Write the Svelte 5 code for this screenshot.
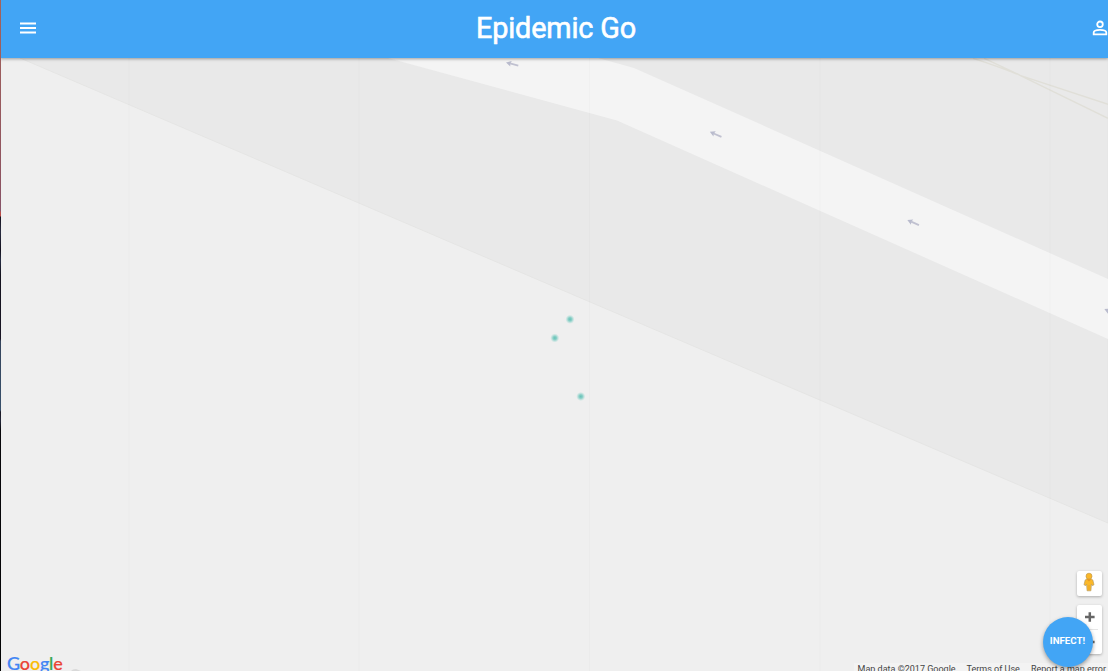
<script>
  const tiles = [129, 359, 589.5, 820, 1050];
  const players = [[570, 319.3], [554.8, 338], [580.8, 396.5]];
  const arrows = [[512, 64, 15], [715.5, 134.3, 24], [913, 222.5, 24], [1110, 311.5, 24]];
  const logo = [['G', '#4285f4'], ['o', '#ea4335'], ['o', '#fbbc05'], ['g', '#4285f4'], ['l', '#34a853'], ['e', '#ea4335']];
</script>

<div class="window">
  <div class="edge"></div>
  <header>
    <button class="menu" aria-label="Menu">
      <svg width="16" height="12" viewBox="0 0 16 12"><path d="M0 1.5h16M0 6h16M0 10.5h16" stroke="#fff" stroke-width="1.8" /></svg>
    </button>
    <h1>Epidemic Go</h1>
    <button class="account" aria-label="Account">
      <svg width="16" height="16" viewBox="0 0 16 16" fill="none" stroke="#fff" stroke-width="1.8"><circle cx="8" cy="4.3" r="2.8" /><path d="M1.7 14.3V12.5C1.7 10.7 5.5 9.9 8 9.9s6.3.8 6.3 2.6v1.8z" /></svg>
    </button>
  </header>
  <main>
    <svg class="map" width="1108" height="613" viewBox="0 58 1108 613">
      <defs>
        <radialGradient id="glow">
          <stop offset="0" stop-color="#62c1b5" />
          <stop offset=".4" stop-color="#72c8be" stop-opacity=".8" />
          <stop offset="1" stop-color="#9ad8d0" stop-opacity="0" />
        </radialGradient>
      </defs>
      <path d="M0 58h1108v613H0z" fill="#efefef" />
      <path d="M20 58H1108V523L562 290z" fill="#e9e9e9" stroke="#e5e5e4" />
      <path d="M388 58H598L634 68L1108 279V339L617 120.5z" fill="#f4f4f4" />
      <path d="M973 58Q1001 67 1020 75L1108 104M984 58Q1010 70 1020 75L1108 118" transform="translate(0 .3)" fill="none" stroke="#e0dfd8" stroke-width="1.3" />
      {#each tiles as x}
        <path d="M{x} 58V671" stroke="#000" stroke-opacity=".015" />
      {/each}
      {#each arrows as [x, y, angle]}
        <g transform="translate({x} {y}) rotate({angle})">
          <path d="M6.5 0H-2" stroke="#c0c1d0" stroke-width="1.8" />
          <path d="M-6.2 0L-1-2.9L-1.8 0L-1 2.9z" fill="#b9bbcd" />
        </g>
      {/each}
      {#each players as [x, y]}
        <circle cx={x} cy={y} r="4.6" fill="url(#glow)" />
      {/each}
      <path d="M71 671l2-1.5 3-.5 5 2z" fill="#d9d9d9" />
    </svg>
    <div class="logo">{#each logo as [letter, color]}<span style="color:{color}">{letter}</span>{/each}</div>
    <div class="credits"><span>Map data ©2017 Google</span><span>Terms of Use</span><span>Report a map error</span></div>
    <div class="controls">
      <div class="pegman">
        <svg width="12" height="20" viewBox="0 0 12 20"><path d="M3.6 7L2.2 8 1 12.8l1.8.8.8-1.4.5 6.6h3.8l.5-6.6.8 1.4 1.8-.8L9.8 8 8.4 7z" fill="#fbb829" stroke="#b79c63" stroke-width=".7" /><circle cx="6" cy="4.2" r="3" fill="#fbb829" stroke="#c29a4c" stroke-width=".7" /><path d="M3.6 7.2h4.8L6 9.5z" fill="#e69624" /><path d="M6 13v5" stroke="#df9c22" stroke-width=".7" /></svg>
      </div>
      <div class="zoom">
        <svg width="25" height="24" viewBox="0 0 25 24"><path d="M8 12h9.6M12.8 7.2v9.6" stroke="#666" stroke-width="2.5" /></svg>
        <i></i>
        <svg width="25" height="24" viewBox="0 0 25 24"><path d="M8 12h9.6" stroke="#666" stroke-width="2.5" /></svg>
      </div>
    </div>
    <button class="infect">INFECT!</button>
  </main>
</div>

<style>
  :global(body) { overflow: hidden; }
  .window { position: relative; display: flex; flex-direction: column; width: 1108px; height: 671px; overflow: hidden; font-family: Roboto, sans-serif; }
  .edge { position: absolute; z-index: 4; left: 0; top: 0; width: 1px; height: 671px; background: linear-gradient(#a4635b 0, #8e5360 180px, #865469 211px, #b94c48 212px, #b94c48 216px, #16131f 217px, #282b40 232px, #13101d 250px, #252c42 260px, #14121e 275px, #191524 339px, #34445c 341px, #38506b 410px, #191823 412px, #222638 421px, #08070b 430px, #030304 671px); }
  header { position: relative; z-index: 3; display: grid; grid-template-columns: 56px 1fr 56px; align-items: center; flex: 0 0 58px; box-sizing: border-box; padding-bottom: 2px; background: #42a5f5; box-shadow: 0 1px 3px rgba(0,0,0,.35); }
  button { border: 0; margin: 0; padding: 0; font: inherit; }
  header button { display: flex; background: none; }
  .menu { padding-left: 20px; }
  .account { justify-content: flex-start; padding-left: 40px; }
  h1 { margin: 0; color: #fff; text-align: center; font-size: 28.8px; line-height: 56px; font-weight: 400; -webkit-text-stroke: .6px #fff; padding-left: 4px; letter-spacing: -.15px; }
  main { position: relative; flex: 1; overflow: hidden; }
  .map { display: block; }
  .logo { position: absolute; left: 7px; bottom: -4px; font: 500 18px/24px Lato, sans-serif; letter-spacing: -.2px; -webkit-text-stroke: .2px currentColor; }
  .credits { position: absolute; right: 0; bottom: -4px; height: 12px; display: flex; gap: 11px; padding: 0 2px 0 4px; background: #f3f3f3; color: #444; font-size: 9px; line-height: 12px; white-space: nowrap; }
  .controls { position: absolute; right: 6px; top: 513px; width: 25px; display: flex; flex-direction: column; gap: 9px; }
  .pegman, .zoom { background: #fff; border-radius: 2px; box-shadow: 0 1px 3px rgba(0,0,0,.28); }
  .pegman { height: 25px; display: flex; align-items: center; justify-content: center; }
  .pegman svg { margin-top: -3px; margin-right: 1px; }
  .zoom { display: flex; flex-direction: column; align-items: center; height: 49px; }
  .zoom i { height: 1px; width: 17px; background: #e6e6e6; }
  .infect { position: absolute; left: 1043px; top: 559px; width: 50px; height: 50px; border-radius: 50%; background: #42a5f5; color: #fff; font-size: 9.7px; line-height: 48px; padding: 0 1px 2px 0; font-weight: 700; text-align: center; box-shadow: 0 2px 4px rgba(0,0,0,.36); white-space: nowrap; }
</style>
